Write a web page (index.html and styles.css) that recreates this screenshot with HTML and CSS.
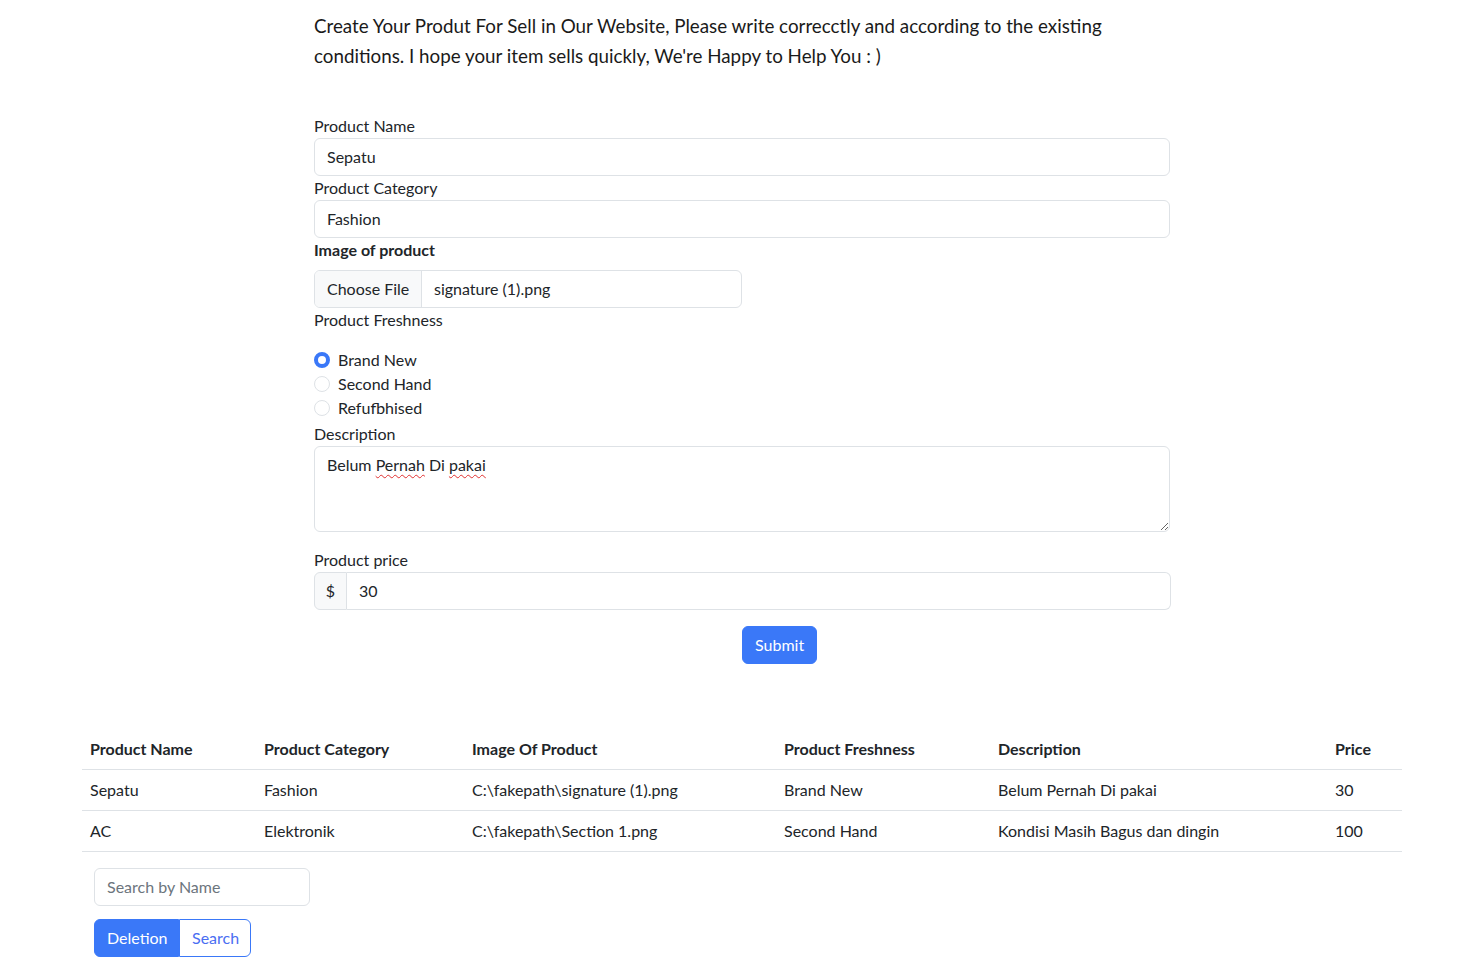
FILE: index.html
```html
<!DOCTYPE html>
<html lang="en">
<head>
<meta charset="utf-8">
<title>Create Product</title>
<link rel="stylesheet" href="styles.css">
</head>
<body>
<main class="page">
  <section class="form-wrap">
    <p class="intro">Create Your Produt For Sell in Our Website, Please write correcctly and according to the existing conditions. I hope your item sells quickly, We're Happy to Help You : )</p>

    <form class="product-form">
      <label class="label">Product Name</label>
      <div class="input">Sepatu</div>

      <label class="label">Product Category</label>
      <div class="input">Fashion</div>

      <label class="label label-bold">Image of product</label>
      <div class="file-input">
        <span class="file-btn">Choose File</span>
        <span class="file-name">signature (1).png</span>
      </div>

      <label class="label">Product Freshness</label>
      <div class="radios">
        <div class="radio-row"><span class="radio checked"></span><span>Brand New</span></div>
        <div class="radio-row"><span class="radio"></span><span>Second Hand</span></div>
        <div class="radio-row"><span class="radio"></span><span>Refufbhised</span></div>
      </div>

      <label class="label label-desc">Description</label>
      <div class="textarea">Belum <span class="spell">Pernah</span> Di <span class="spell">pakai</span></div>

      <label class="label label-price">Product price</label>
      <div class="input-group">
        <span class="addon">$</span>
        <span class="group-input">30</span>
      </div>

      <div class="submit-row">
        <button type="button" class="btn btn-primary">Submit</button>
      </div>
    </form>
  </section>

  <section class="table-wrap">
    <table class="table">
      <colgroup>
        <col class="c1"><col class="c2"><col class="c3"><col class="c4"><col class="c5"><col class="c6">
      </colgroup>
      <thead>
        <tr><th>Product Name</th><th>Product Category</th><th>Image Of Product</th><th>Product Freshness</th><th>Description</th><th>Price</th></tr>
      </thead>
      <tbody>
        <tr><td>Sepatu</td><td>Fashion</td><td>C:\fakepath\signature (1).png</td><td>Brand New</td><td>Belum Pernah Di pakai</td><td>30</td></tr>
        <tr><td>AC</td><td>Elektronik</td><td>C:\fakepath\Section 1.png</td><td>Second Hand</td><td>Kondisi Masih Bagus dan dingin</td><td>100</td></tr>
      </tbody>
    </table>

    <div class="tools">
      <div class="input search-input">Search by Name</div>
      <div class="btn-group">
        <button type="button" class="btn btn-primary grp-left">Deletion</button>
        <button type="button" class="btn btn-outline grp-right">Search</button>
      </div>
    </div>
  </section>
</main>
</body>
</html>
```

FILE: styles.css
```css
* { box-sizing: border-box; }

html, body {
  margin: 0;
  background: #fff;
}

body {
  font-family: "Lato", "Noto Sans", "Liberation Sans", sans-serif;
  font-size: 16px;
  line-height: 24px;
  color: #212529;
}

.page {
  display: flex;
  flex-direction: column;
}

.form-wrap {
  margin-left: 314px;
  width: 856px;
}

.intro {
  margin: 11px 0 0 0;
  font-family: "Lato", "Noto Sans", sans-serif;
  font-size: 18.8px;
  line-height: 30px;
  letter-spacing: 0;
  color: #1a1a1a;
  width: 820px;
}

.product-form {
  display: flex;
  flex-direction: column;
  margin-top: 43px;
}

.label {
  display: block;
  line-height: 24px;
}

.label-bold {
  font-weight: 700;
  margin-bottom: 8px;
}

.input {
  height: 38px;
  padding: 6px 12px;
  border: 1px solid #dee2e6;
  border-radius: 6px;
  background: #fff;
  line-height: 24px;
}

.file-input {
  width: 428px;
  height: 38px;
  display: flex;
  border: 1px solid #dee2e6;
  border-radius: 6px;
  overflow: hidden;
}

.file-btn {
  padding: 6px 12px;
  background: #f8f9fa;
  border-right: 1px solid #dee2e6;
  width: 107px;
  flex: none;
  white-space: nowrap;
}

.file-name {
  padding: 6px 12px;
  white-space: nowrap;
}

.radios {
  margin-top: 16px;
  display: flex;
  flex-direction: column;
}

.radio-row {
  display: flex;
  align-items: center;
  height: 24px;
  gap: 8px;
}

.radio {
  width: 16px;
  height: 16px;
  border-radius: 50%;
  border: 1px solid #dee2e6;
  background: #fff;
}

.radio.checked {
  border: 4px solid #3a78f8;
  background: #fff;
}

.label-desc {
  margin-top: 2px;
}

.textarea {
  height: 86px;
  padding: 6px 12px;
  border: 1px solid #dee2e6;
  border-radius: 6px;
  resize: vertical;
  overflow: auto;
}

.spell {
  text-decoration: underline wavy #e03030;
  text-decoration-thickness: 1px;
  text-underline-offset: 3px;
}

.label-price {
  margin-top: 16px;
}

.input-group {
  display: flex;
  height: 38px;
  width: 857px;
}

.addon {
  width: 33px;
  padding: 6px 0;
  text-align: center;
  background: #f8f9fa;
  border: 1px solid #dee2e6;
  border-radius: 6px 0 0 6px;
}

.group-input {
  flex: 1;
  padding: 6px 12px;
  border: 1px solid #dee2e6;
  border-left: none;
  border-radius: 0 6px 6px 0;
}

.submit-row {
  margin-top: 16px;
  padding-left: 428px;
}

.btn {
  font-family: inherit;
  font-size: 16px;
  line-height: 24px;
  height: 38px;
  padding: 6px 12px;
  border-radius: 6px;
  border: 1px solid #3a78f8;
  cursor: pointer;
}

.btn-primary {
  background: #3a78f8;
  color: #fff;
}

.btn-outline {
  background: #fff;
  color: #4a6ef2;
}

.table-wrap {
  margin-left: 82px;
  width: 1320px;
  margin-top: 65px;
}

.table {
  width: 100%;
  border-collapse: collapse;
  table-layout: fixed;
}

.c1 { width: 174px; }
.c2 { width: 208px; }
.c3 { width: 312px; }
.c4 { width: 214px; }
.c5 { width: 337px; }
.c6 { width: 75px; }

.table th,
.table td {
  text-align: left;
  padding: 8px;
  border-bottom: 1px solid #dee2e6;
  line-height: 24px;
  white-space: nowrap;
}

.table th {
  font-weight: 700;
}

.tools {
  padding-left: 12px;
  margin-top: 16px;
  display: flex;
  flex-direction: column;
  align-items: flex-start;
  gap: 13px;
}

.search-input {
  width: 216px;
  color: #6c757d;
}

.btn-group {
  display: flex;
}

.grp-left {
  border-radius: 6px 0 0 6px;
  width: 85px;
}

.grp-right {
  border-radius: 0 6px 6px 0;
  width: 72px;
}
```
